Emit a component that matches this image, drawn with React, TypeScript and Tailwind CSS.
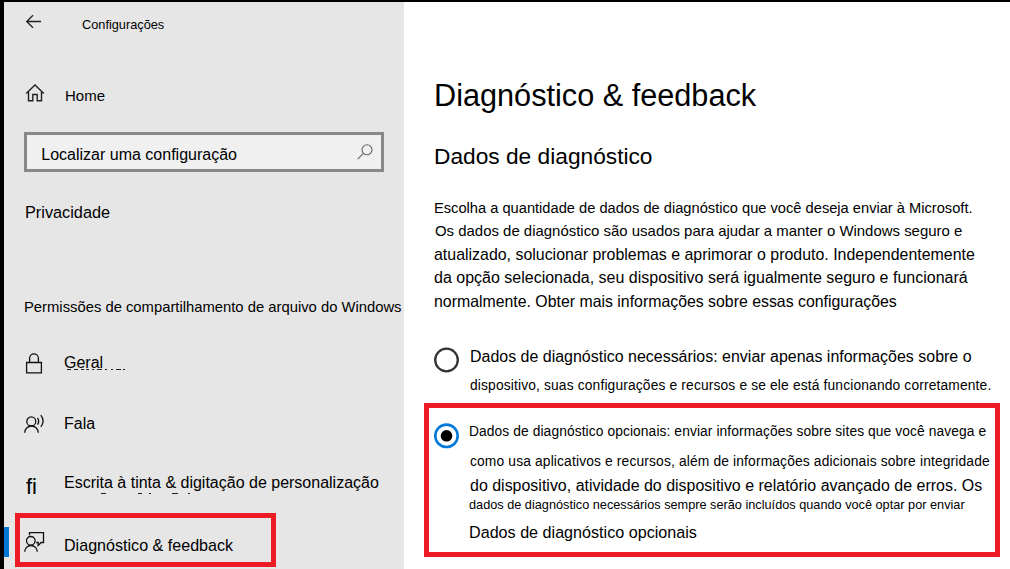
import type { ReactNode } from "react";

function NavRow({ className, icon, children }: { className: string; icon: ReactNode; children: ReactNode }) {
  return (
    <div className={`flex items-start ${className}`}>
      <div className="w-10 shrink-0">{icon}</div>
      {children}
    </div>
  );
}

function BackIcon() {
  return (
    <svg className="block" width="18" height="16" viewBox="0 0 18 16" fill="none" stroke="#222" strokeWidth="1.3">
      <path d="M16 7.5H1.5M8 1.2L1.7 7.5 8 13.8" />
    </svg>
  );
}

function HomeIcon() {
  return (
    <svg className="block" width="22" height="20" viewBox="0 0 22 20" fill="none" stroke="#222" strokeWidth="1.4">
      <path d="M2.2 10.5L11 1.9l8.8 8.6M4.5 9v8.8h4.3v-6.3h4.4v6.3h4.3V9" />
    </svg>
  );
}

function SearchIcon() {
  return (
    <svg className="block" width="16" height="16" viewBox="0 0 16 16" fill="none" stroke="#666" strokeWidth="1.1">
      <circle cx="10" cy="5.8" r="5" />
      <path d="M6.4 9.4L.7 15.2" />
    </svg>
  );
}

function LockIcon() {
  return (
    <svg className="block" width="20" height="21" viewBox="0 0 20 21" fill="none" stroke="#111" strokeWidth="1.3">
      <path d="M2.6 9.5h14.8v10.3H2.6zM5.6 9.5V5.2a4.4 4.4 0 0 1 8.8 0v4.3" />
    </svg>
  );
}

function SpeechIcon() {
  return (
    <svg className="block" width="22" height="20" viewBox="0 0 22 20" fill="none" stroke="#111" strokeWidth="1.3">
      <circle cx="7.3" cy="7.4" r="4.5" />
      <path d="M.7 18.8a6.8 6.8 0 0 1 13.6 0M13.5 3.8q2.4 3.4 0 6.8M16.8 1.2q4.6 5.8 0 11.6" />
    </svg>
  );
}

function FeedbackIcon() {
  return (
    <svg className="block" width="22" height="22" viewBox="0 0 22 22" fill="none" stroke="#111" strokeWidth="1.3">
      <circle cx="6.8" cy="9.8" r="4.3" />
      <path d="M.7 20.8a6.3 6.3 0 0 1 12.6 0M5.5 4.2V1.6h14v9.9h-2.3l-3 2.9v-2.9h-2" />
    </svg>
  );
}

export default function App() {
  return (
    <div className="flex h-[569px] w-[1010px] overflow-hidden border-t-2 border-l-4 border-black bg-white font-['Liberation_Sans',Arial,sans-serif] text-base whitespace-nowrap text-black">
      <aside className="w-[400px] shrink-0 bg-[#e6e6e6]">
        <header className="flex items-start pt-3 pl-[21px]">
          <BackIcon />
          <span className="ml-[39px] pt-px text-[12.75px] leading-5">Configurações</span>
        </header>

        <NavRow className="mt-12 pl-5" icon={<HomeIcon />}>
          <span className="ml-px pt-[3px] text-[15px] leading-5">Home</span>
        </NavRow>

        <div className="mt-[26px] ml-5 flex h-10 w-[360px] items-start justify-between border-[3px] border-[#888] bg-[#f0f0f0] pr-2 pl-[14.3px]">
          <span className="pt-2 leading-6">Localizar uma configuração</span>
          <span className="pt-[9px]"><SearchIcon /></span>
        </div>

        <h2 className="mt-7 ml-[21px] text-[16.3px] leading-6">Privacidade</h2>
        <h3 className="mt-[71px] ml-5 text-[14.8px] leading-6">Permissões de compartilhamento de arquivo do Windows</h3>

        <NavRow className="mt-[34px] pl-5" icon={<LockIcon />}>
          <div className="relative h-[21px]">
            <span className="block leading-5">Geral</span>
            <svg className="absolute top-4 left-0" width="62" height="1" fill="none" stroke="#222">
              <path d="M3 .5h4m3 0h4m3 0h3m2 0h3m3 0h2m3 0h5m3 0h2m4 0h2m3 0h5m2 0h2" />
            </svg>
          </div>
        </NavRow>
        <NavRow className="mt-10 pl-5" icon={<SpeechIcon />}>
          <span className="leading-5">Fala</span>
        </NavRow>
        <NavRow className="mt-[39px] pl-5" icon={<span className="block pt-0.5 pl-[2px] text-[22px] leading-6">fi</span>}>
          <div className="relative">
            <span className="block leading-5">Escrita à tinta &amp; digitação de personalização</span>
            <svg className="absolute top-5 left-0" width="140" height="1" fill="none" stroke="#222">
              <path d="M37 .5h5M74 .5h4M85 .5h2M108 .5h6M124 .5h2" />
            </svg>
          </div>
        </NavRow>

        <div className="mt-[14px] flex items-start">
          <div className="mt-[14px] h-[30px] w-[5px] bg-[#0078d7]" />
          <div className="ml-[6px] h-[54px] w-[261px] border-[5px] border-[#ed1c24] pl-1">
            <NavRow className="pt-[13px]" icon={<FeedbackIcon />}>
              <span className="pt-[4px] text-[16.1px] leading-5">Diagnóstico &amp; feedback</span>
            </NavRow>
          </div>
        </div>
      </aside>

      <main className="flex-1 pt-[73px] pl-5">
        <h1 className="pl-[10px] text-[30.67px] leading-10">Diagnóstico &amp; feedback</h1>
        <h2 className="mt-[26px] pl-[10px] text-[22.72px] leading-[30px]">Dados de diagnóstico</h2>

        <div className="mt-[26px] pl-2.5 leading-[23px]">
          <div className="text-[14.67px]">Escolha a quantidade de dados de diagnóstico que você deseja enviar à Microsoft.</div>
          <div className="-mt-px pl-[1px] text-[14.95px]">Os dados de diagnóstico são usados para ajudar a manter o Windows seguro e</div>
          <div className="mt-px text-[15.93px]">atualizado, solucionar problemas e aprimorar o produto. Independentemente</div>
          <div>da opção selecionada, seu dispositivo será igualmente seguro e funcionará</div>
          <div className="mt-px text-[15.87px]">normalmente. Obter mais informações sobre essas configurações</div>
        </div>

        <div className="mt-8 flex items-start pl-2.5">
          <svg className="mt-[2px] block" width="25" height="26" fill="none" stroke="#333" strokeWidth="2.3">
            <circle cx="12.5" cy="13" r="11.3" />
          </svg>
          <div className="ml-[11px] leading-6">
            <div className="text-[15.97px]">Dados de diagnóstico necessários: enviar apenas informações sobre o</div>
            <div className="mt-[5px] text-[13.8px] tracking-[0.148px]">dispositivo, suas configurações e recursos e se ele está funcionando corretamente.</div>
          </div>
        </div>

        <div className="mt-[5px] flex h-[154px] w-[576px] items-start border-[5px] border-[#ed1c24] pt-3 pl-[5px]">
          <svg className="mt-[3px] block" width="25" height="26" fill="none" stroke="#0078d7" strokeWidth="2.6">
            <circle cx="12.5" cy="12.8" r="11.2" />
            <circle cx="12.5" cy="12.8" r="5.8" fill="#000" stroke="none" />
          </svg>
          <div className="ml-[10px] leading-6">
            <div className="text-[13.8px] tracking-[0.09px]">Dados de diagnóstico opcionais: enviar informações sobre sites que você navega e</div>
            <div className="mt-[6px] pl-px text-[13.8px] tracking-[0.15px]">como usa aplicativos e recursos, além de informações adicionais sobre integridade</div>
            <div className="pl-px text-[15.97px]">do dispositivo, atividade do dispositivo e relatório avançado de erros. Os</div>
            <div className="-mt-px text-[12.73px] leading-4">dados de diagnóstico necessários sempre serão incluídos quando você optar por enviar</div>
            <div className="mt-[7px] text-[16.15px]">Dados de diagnóstico opcionais</div>
          </div>
        </div>
      </main>
    </div>
  );
}
